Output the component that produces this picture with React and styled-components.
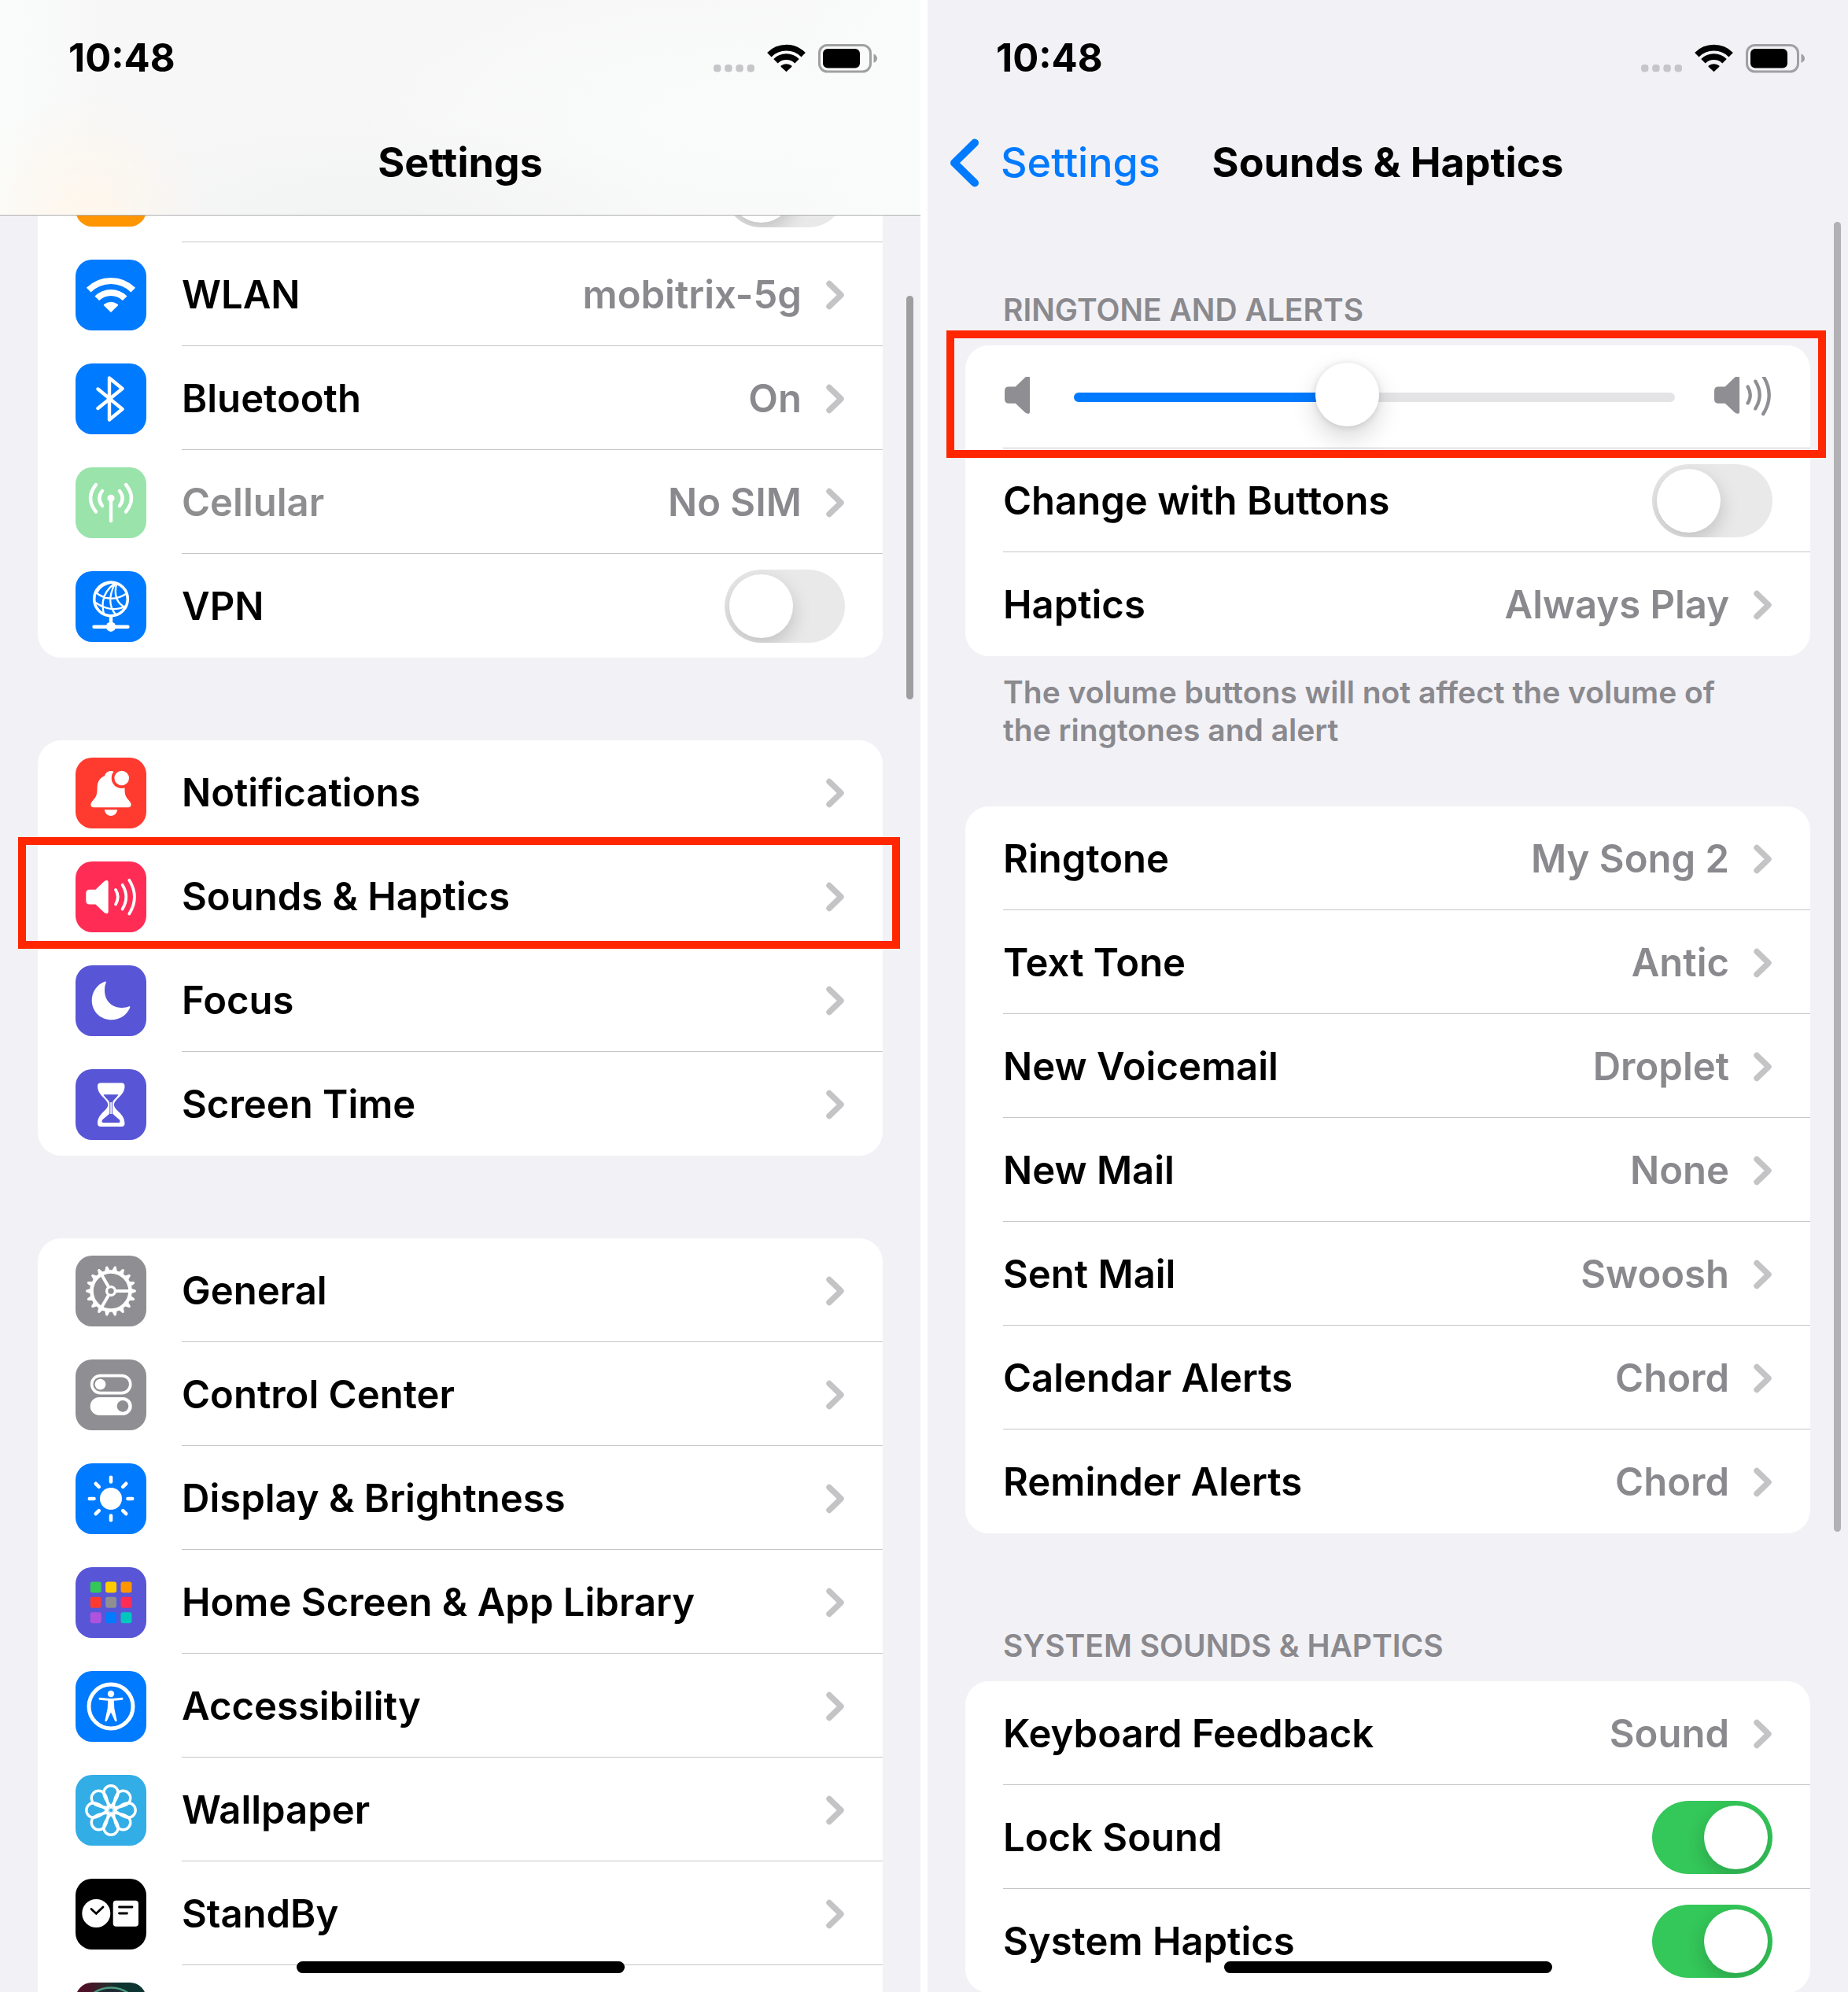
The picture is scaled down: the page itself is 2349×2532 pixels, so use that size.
import React, { useState } from "react";
import styled, { createGlobalStyle } from "styled-components";

const GlobalStyle = createGlobalStyle`
  * {
    box-sizing: border-box;
  }
  body {
    margin: 0;
    background: #fff;
    color: #000;
    font-family: Inter, "Liberation Sans", sans-serif;
    -webkit-font-smoothing: antialiased;
  }
`;

const Page = styled.div`
  display: grid;
  grid-template-columns: 1fr 1fr;
  gap: 9px;
  height: 100vh;
`;

const Phone = styled.section`
  position: relative;
  display: flex;
  flex-direction: column;
  min-width: 0;
  overflow: hidden;
  background: #f2f1f6;
`;

const Header = styled.header`
  position: relative;
  z-index: 2;
  flex: none;
`;

const FrostedHeader = styled(Header)`
  border-bottom: 1px solid #b0b0b2;
  background:
    radial-gradient(ellipse 150px 150px at 110px 270px, #fff7ec, #fff7ec00),
    radial-gradient(ellipse 400px 120px at 460px 273px, #f2f3f3, #f2f3f300),
    radial-gradient(ellipse 520px 200px at 960px 150px, #fafcfb, #fafcfb00),
    linear-gradient(90deg, #fafcfb, #f7f7f7 12%, #f7f7f7 85%, #fafcfb);
`;

const StatusBar = styled.div`
  display: flex;
  align-items: center;
  height: 141px;
  padding: 7px 55px 0 87px;
`;

const Time = styled.time`
  flex: 1;
  font-size: 49px;
  line-height: 60px;
  font-weight: 700;
`;

const StatusIcons = styled.div`
  display: flex;
  align-items: center;
  gap: 16px;
`;

const NavBar = styled.nav`
  display: grid;
  grid-template-columns: 1fr auto 1fr;
  align-items: center;
  height: 132px;
`;

const Title = styled.h1`
  grid-column: 2;
  margin: 0;
  font-size: 52px;
  line-height: 60px;
  font-weight: 700;
`;

const BackLink = styled.a`
  display: flex;
  align-items: center;
  gap: 27px;
  padding-left: 28px;
  color: #007aff;
  font-size: 52px;
  line-height: 60px;
  font-weight: 500;
  text-decoration: none;
`;

const List = styled.main`
  flex: 1;
  min-height: 0;
  padding: ${(p) => p.$top || 0}px 48px 0;
`;

/* the list is scrolled, its first row sits partly under the header */
const ScrolledList = styled(List)`
  margin-top: -98px;
`;

const Card = styled.div`
  margin-bottom: ${(p) => p.$space || 0}px;
  border-radius: 30px;
  background: #fff;
`;

const CardLabel = styled.h2`
  margin: 0 0 21px 48px;
  color: #8a898e;
  font-size: 39px;
  line-height: 48px;
  font-weight: 600;
`;

const CardNote = styled.p`
  margin: 22px 48px 73px;
  color: #8a898e;
  font-size: 39px;
  line-height: 48px;
  font-weight: 600;
`;

const Row = styled.div`
  position: relative;
  display: flex;
  align-items: center;
  gap: 45px;
  padding: 2px 0 0 48px;
  color: ${(p) => (p.$dim ? "#8e8e90" : "#000")};
  text-decoration: none;
`;

const RowBody = styled.div`
  display: flex;
  flex: 1;
  align-items: center;
  gap: 30px;
  height: 130px;
  padding-right: 48px;
  border-bottom: 1px solid #c6c6c8;

  ${Row}:last-child > & {
    border-bottom-color: transparent;
  }
`;

const Label = styled.span`
  flex: 1;
  font-size: 49px;
  line-height: 60px;
  font-weight: 600;
  white-space: nowrap;
`;

const Value = styled.span`
  color: #8a898e;
  font-size: 49px;
  line-height: 60px;
  font-weight: 600;
  white-space: nowrap;
`;

const Tile = styled.svg`
  display: block;
  flex: none;
  width: 90px;
  height: 90px;
  border-radius: 21px;
  background: ${(p) => p.$bg};
`;

const Switch = styled.input`
  appearance: none;
  flex: none;
  width: 153px;
  height: 93px;
  margin: 0;
  padding: 6px;
  overflow: hidden;
  border-radius: 47px;
  background: #e9e9ea;

  &::before {
    content: "";
    display: block;
    width: 81px;
    height: 81px;
    border-radius: 50%;
    background: #fff;
    box-shadow: 0 9px 24px rgba(0, 0, 0, 0.18);
  }
  &:checked {
    background: #34c759;
  }
  &:checked::before {
    margin-left: auto;
  }
`;

const SliderBody = styled(RowBody)`
  gap: 50px;
  height: 129px;
`;

const Slider = styled.input`
  appearance: none;
  flex: 1;
  min-width: 0;
  height: 12px;
  margin: 0;
  background: none;

  &::-webkit-slider-runnable-track {
    height: 12px;
    border-radius: 6px;
    background: linear-gradient(
      90deg,
      #007aff ${(p) => p.value}%,
      #e4e4e6 ${(p) => p.value}%
    );
  }
  &::-webkit-slider-thumb {
    appearance: none;
    width: 81px;
    height: 81px;
    margin-top: -38px;
    border-radius: 50%;
    background: #fff;
    box-shadow:
      0 1px 8px rgba(0, 0, 0, 0.12),
      0 14px 32px rgba(0, 0, 0, 0.16);
  }
`;

const Highlight = styled.div`
  position: absolute;
  z-index: 1;
  inset: ${(p) => p.$inset};
  border: 10px solid #ff2600;
  pointer-events: none;
`;

const ScrollBar = styled.div`
  position: absolute;
  right: 9px;
  top: ${(p) => p.$top}px;
  height: ${(p) => p.$size}px;
  width: 9px;
  border-radius: 5px;
  background: ${(p) => p.$color};
`;

const HomeBar = styled.div`
  position: absolute;
  z-index: 3;
  bottom: 24px;
  left: 50%;
  width: 417px;
  height: 15px;
  margin-left: -208px;
  border-radius: 8px;
  background: #000;
`;

const WifiShape = ({ band = 8 }) => (
  <>
    <path
      d="M16.7 38.7A40 40 0 0 1 73.3 38.7M27.3 49.3A25 25 0 0 1 62.7 49.3"
      fill="none"
      stroke="currentColor"
      strokeWidth={band}
    />
    <path
      d="M45 67L36.2 58.6Q35 57.4 36.6 56.4Q45 51 53.4 56.4Q55 57.4 53.8 58.6Z"
      fill="currentColor"
    />
  </>
);

const speakerBody =
  "M18 35.8H25.5L36.5 25.3Q41.7 22 41.7 27V63.4Q41.7 68 36.5 65L25.5 54.6H18Q13.3 54.6 13.3 50V40.4Q13.3 35.8 18 35.8Z";

const SpeakerShape = ({ waves = true }) => (
  <>
    <path d={speakerBody} fill="currentColor" />
    {waves && (
      <path
        d="M51 35.9Q56.6 45.2 51 54.4M59.6 29.8Q69 45.2 59.6 60.6M68.3 23.8Q81.6 45.2 68.3 66.6"
        fill="none"
        stroke="currentColor"
        strokeWidth="3.8"
        strokeLinecap="round"
      />
    )}
  </>
);

const turns = (n) => Array.from({ length: n }, (_, i) => (360 / n) * i);

const homeColors = [
  "#34c759",
  "#ffcc00",
  "#ff9500",
  "#ff3b30",
  "#8e8e93",
  "#ff2d55",
  "#af52de",
  "#007aff",
  "#00c7be",
];

const glyphs = {
  airplane: {
    bg: "#ff9500",
    art: (
      <path
        d="M73 45q0-4-8-4H54L39 20h-5l7 21H28l-6-8h-4l4 12-4 12h4l6-8h13l-7 21h5l15-21h11q8 0 8-4z"
        fill="#fff"
      />
    ),
  },
  wlan: { bg: "#007aff", art: <WifiShape /> },
  bluetooth: {
    bg: "#007aff",
    art: (
      <path
        d="M28.5 32.5L59.5 58L43 71.5V18.5L59.5 32L28.5 57"
        fill="none"
        stroke="#fff"
        strokeWidth="4.4"
        strokeLinecap="round"
        strokeLinejoin="round"
      />
    ),
  },
  cellular: {
    bg: "#9ae4ab",
    art: (
      <g fill="none" stroke="#fff" strokeWidth="4.4" strokeLinecap="round">
        <path d="M45 40V68M34 30Q26.6 39.3 34 49M56 30Q63.4 39.3 56 49M26 22Q12 39.3 26 56.5M64 22Q78 39.3 64 56.5" />
        <circle cx="45" cy="39.3" r="4.6" fill="#fff" stroke="none" />
      </g>
    ),
  },
  vpn: {
    bg: "#007aff",
    art: (
      <g fill="none" stroke="#fff" strokeWidth="2.3" strokeLinecap="round">
        <circle cx="45" cy="35.4" r="21.3" strokeWidth="3.6" />
        <path d="M49 16Q30 31 36 54M50 16Q38 40 51 55M52 16Q47 38 63 46M44 15Q32 18 28 26M25.5 27Q45 42 65.5 28M25.5 40Q46 54 64.5 44" />
        <path d="M45 58V68M23.5 70.7H66.5" strokeWidth="4.4" />
        <circle cx="45" cy="70.7" r="6.2" fill="#fff" stroke="none" />
      </g>
    ),
  },
  bell: {
    bg: "#ff3b30",
    art: (
      <>
        <path
          d="M45 17C41 17 38 19.5 37 23.3C31 25.5 27.7 31 27.6 38C27.5 48 26 50 22.5 54C19.5 57.5 19 59 19.6 61Q20.2 63.2 22.5 63.2H67.5Q69.8 63.2 70.4 61C71 59 70.5 57.5 67.5 54C64 50 62.5 48 62.4 38C62.3 31 59 25.5 53 23.3C52 19.5 49 17 45 17ZM36.7 66.2H53.3Q51.5 74 45 74Q38.5 74 36.7 66.2Z"
          fill="#fff"
        />
        <circle cx="58.7" cy="26" r="13" fill="#ff3b30" />
        <circle cx="58.7" cy="26" r="9.3" fill="#fff" />
      </>
    ),
  },
  sound: { bg: "#ff2d55", art: <SpeakerShape /> },
  moon: {
    bg: "#5856d6",
    art: (
      <path
        d="M68 52.3C65.5 53.6 62.5 54 59 54C46 54 37 45 37 32C37 28 37.5 25 38.7 22.3Q39.3 19.8 37 20.7C27 24.5 20.7 34 20.7 44.5C20.7 58.5 31.5 69.3 46 69.3C56.5 69.3 65.5 63 69.2 53.8Q69.7 51.5 68 52.3Z"
        fill="#fff"
      />
    ),
  },
  hourglass: {
    bg: "#5856d6",
    art: (
      <>
        <path
          d="M32 17.5H58.5Q62.5 17.5 62.5 21.5C62.5 34 49 38 49 45.2C49 52.5 62.5 56 62.5 69Q62.5 73 58.5 73H32Q28 73 28 69C28 56 41.3 52.5 41.3 45.2C41.3 38 28 34 28 21.5Q28 17.5 32 17.5Z"
          fill="#fff"
        />
        <path
          d="M35.5 32.3H54.5C52.5 36.5 47.5 39 46.9 43V56.5L56 64.5Q57.5 68 54.5 68H35.5Q32.5 68 34 64.5L43.3 56.5V43C42.5 39 37.5 36.5 35.5 32.3Z"
          fill="#5856d6"
        />
        <path d="M45.1 42V57" stroke="#fff" strokeWidth="1.6" />
      </>
    ),
  },
  gear: {
    bg: "#8e8e93",
    art: (
      <g fill="none" stroke="#fff">
        <circle cx="45" cy="45" r="24.5" strokeWidth="4.6" />
        <circle cx="45" cy="45" r="5.4" strokeWidth="3.4" />
        {turns(3).map((a) => (
          <path
            key={a}
            d="M51.5 45H68"
            strokeWidth="4"
            transform={`rotate(${a} 45 45)`}
          />
        ))}
        {turns(18).map((a) => (
          <path
            key={a}
            d="M71 41.8L76.5 43.7Q77.5 45 76.5 46.3L71 48.2Z"
            fill="#fff"
            stroke="none"
            transform={`rotate(${a} 45 45)`}
          />
        ))}
      </g>
    ),
  },
  control: {
    bg: "#8e8e93",
    art: (
      <>
        <rect
          x="20.6"
          y="20.6"
          width="49.2"
          height="22"
          rx="11"
          fill="none"
          stroke="#fff"
          strokeWidth="3.6"
        />
        <circle cx="31.5" cy="31.6" r="6.9" fill="#fff" />
        <rect x="18.7" y="47.9" width="53" height="23" rx="11.5" fill="#fff" />
        <circle cx="60" cy="59.4" r="7.3" fill="#8e8e93" />
      </>
    ),
  },
  sun: {
    bg: "#007aff",
    art: (
      <g stroke="#fff" strokeWidth="4.6" strokeLinecap="round">
        <circle cx="45" cy="45" r="14" fill="#fff" stroke="none" />
        {turns(8).map((a) => (
          <path key={a} d="M66.5 45H72.2" transform={`rotate(${a} 45 45)`} />
        ))}
      </g>
    ),
  },
  home: {
    bg: "#5856d6",
    art: homeColors.map((c, i) => (
      <rect
        key={c}
        x={18.7 + (i % 3) * 19.4}
        y={18.4 + Math.floor(i / 3) * 19.4}
        width="14"
        height="14"
        rx="3"
        fill={c}
      />
    )),
  },
  access: {
    bg: "#007aff",
    art: (
      <g fill="none" stroke="#fff" strokeLinecap="round" strokeLinejoin="round">
        <circle cx="45" cy="45" r="28" strokeWidth="5" />
        <circle cx="45" cy="29" r="4.2" fill="#fff" stroke="none" />
        <path d="M31 35.3Q45 37.5 59 35.3" strokeWidth="3" />
        <path
          d="M42.5 37H47.5L48 47.5L51.3 63L45 49.5L38.7 63L42 47.5Z"
          fill="#fff"
          strokeWidth="2.6"
        />
      </g>
    ),
  },
  flower: {
    bg: "#32ade6",
    art: (
      <g fill="none" stroke="#fff" strokeWidth="3.4">
        {turns(8).map((a) => (
          <path
            key={a}
            d="M45 40.5C41 35 35.8 29.5 35.8 23A9.2 9.2 0 0 1 54.2 23C54.2 29.5 49 35 45 40.5Z"
            transform={`rotate(${a} 45 45)`}
          />
        ))}
      </g>
    ),
  },
  standby: {
    bg: "#000",
    art: (
      <g fill="#fff">
        <circle cx="26.3" cy="44" r="18" />
        <rect x="47.7" y="27.7" width="32.3" height="33" rx="4" />
        <path
          d="M20 38.5L26.3 44.3L35 36M55.5 36H72M55.5 44H65.5"
          fill="none"
          stroke="#000"
          strokeWidth="2.8"
          strokeLinecap="round"
        />
      </g>
    ),
  },
  siri: {
    bg: "linear-gradient(90deg, #4d1026 15%, #2d2a2e 42%, #0c3430 60%)",
    art: (
      <circle
        cx="45"
        cy="45"
        r="38.5"
        fill="#1c2b33"
        stroke="#4f9a80"
        strokeWidth="2.5"
      />
    ),
  },
};

const Glyph = ({ name }) => (
  <Tile viewBox="0 0 90 90" $bg={glyphs[name].bg} color="#fff" aria-hidden="true">
    {glyphs[name].art}
  </Tile>
);

const Chevron = () => (
  <svg width="25" height="38" viewBox="0 0 25 38" aria-hidden="true">
    <path
      d="M5 4.5L20 19L5 33.5"
      fill="none"
      stroke="#c4c4c6"
      strokeWidth="7.4"
      strokeLinecap="round"
      strokeLinejoin="round"
    />
  </svg>
);

const PhoneStatus = () => (
  <StatusBar>
    <Time>10:48</Time>
    <StatusIcons>
      <svg width="52" height="36" viewBox="0 0 52 36" aria-hidden="true">
        {[0, 1, 2, 3].map((i) => (
          <rect key={i} x={i * 14.2} y="26" width="9.4" height="9.4" rx="4" fill="#c6c6c8" />
        ))}
      </svg>
      <svg width="49" height="37" viewBox="13 22 64 46" aria-hidden="true">
        <WifiShape band={10} />
      </svg>
      <svg width="75" height="37" viewBox="0 0 75 37" aria-hidden="true">
        <rect x="1.5" y="1.5" width="65" height="33.5" rx="10" fill="none" stroke="#a0a0a2" strokeWidth="3" />
        <rect x="6" y="6" width="47" height="24.5" rx="6" fill="#000" />
        <path d="M70.5 12.5Q75 14.5 75 18.3Q75 22 70.5 24Z" fill="#a0a0a2" />
      </svg>
    </StatusIcons>
  </StatusBar>
);

const LinkRow = ({ icon, label, value, dim, highlight }) => (
  <Row as="a" href="#" $dim={dim}>
    {icon && <Glyph name={icon} />}
    <RowBody>
      <Label>{label}</Label>
      {value && <Value>{value}</Value>}
      <Chevron />
    </RowBody>
    {highlight && <Highlight $inset="-9px -22px -1px -25px" />}
  </Row>
);

const SwitchRow = ({ icon, label, name, on = false }) => {
  const [checked, setChecked] = useState(on);
  return (
    <Row as="label">
      {icon && <Glyph name={icon} />}
      <RowBody>
        <Label>{label}</Label>
        <Switch
          type="checkbox"
          role="switch"
          aria-label={name || label}
          checked={checked}
          onChange={(e) => setChecked(e.target.checked)}
        />
      </RowBody>
    </Row>
  );
};

const VolumeRow = () => {
  const [volume, setVolume] = useState(45);
  return (
    <Row>
      <SliderBody>
        <svg width="40" height="52" viewBox="0 0 40 52" color="#8e8e93" aria-hidden="true">
          <g transform="translate(-13 -28) scale(1.13)">
            <SpeakerShape waves={false} />
          </g>
        </svg>
        <Slider
          type="range"
          min="0"
          max="100"
          aria-label="Ringtone and alerts volume"
          value={volume}
          onChange={(e) => setVolume(e.target.value)}
        />
        <svg width="74" height="52" viewBox="0 0 74 52" color="#8e8e93" aria-hidden="true">
          <g transform="translate(-15 -28) scale(1.13)">
            <SpeakerShape />
          </g>
        </svg>
      </SliderBody>
      <Highlight $inset="-19px -20px -12px -24px" />
    </Row>
  );
};

const SettingsScreen = () => (
  <Phone>
    <FrostedHeader>
      <PhoneStatus />
      <NavBar>
        <Title>Settings</Title>
      </NavBar>
    </FrostedHeader>
    <ScrolledList>
      <Card $space={105}>
        <SwitchRow icon="airplane" name="Airplane Mode" />
        <LinkRow icon="wlan" label="WLAN" value="mobitrix-5g" />
        <LinkRow icon="bluetooth" label="Bluetooth" value="On" />
        <LinkRow icon="cellular" label="Cellular" value="No SIM" dim />
        <SwitchRow icon="vpn" label="VPN" />
      </Card>
      <Card $space={105}>
        <LinkRow icon="bell" label="Notifications" />
        <LinkRow icon="sound" label="Sounds & Haptics" highlight />
        <LinkRow icon="moon" label="Focus" />
        <LinkRow icon="hourglass" label="Screen Time" />
      </Card>
      <Card>
        <LinkRow icon="gear" label="General" />
        <LinkRow icon="control" label="Control Center" />
        <LinkRow icon="sun" label="Display & Brightness" />
        <LinkRow icon="home" label="Home Screen & App Library" />
        <LinkRow icon="access" label="Accessibility" />
        <LinkRow icon="flower" label="Wallpaper" />
        <LinkRow icon="standby" label="StandBy" />
        <LinkRow icon="siri" />
      </Card>
    </ScrolledList>
    <ScrollBar $top={376} $size={513} $color="#9e9ea0" />
    <HomeBar />
  </Phone>
);

const SoundsScreen = () => (
  <Phone>
    <Header>
      <PhoneStatus />
      <NavBar>
        <BackLink href="#">
          <svg width="38" height="62" viewBox="0 0 38 62" aria-hidden="true">
            <path
              d="M32 5.5L6 31L32 56.5"
              fill="none"
              stroke="currentColor"
              strokeWidth="10"
              strokeLinecap="round"
              strokeLinejoin="round"
            />
          </svg>
          Settings
        </BackLink>
        <Title>Sounds &amp; Haptics</Title>
      </NavBar>
    </Header>
    <List $top={97}>
      <CardLabel>RINGTONE AND ALERTS</CardLabel>
      <Card>
        <VolumeRow />
        <SwitchRow label="Change with Buttons" />
        <LinkRow label="Haptics" value="Always Play" />
      </Card>
      <CardNote>
        The volume buttons will not affect the volume of
        <br />
        the ringtones and alert
      </CardNote>
      <Card $space={119}>
        <LinkRow label="Ringtone" value="My Song 2" />
        <LinkRow label="Text Tone" value="Antic" />
        <LinkRow label="New Voicemail" value="Droplet" />
        <LinkRow label="New Mail" value="None" />
        <LinkRow label="Sent Mail" value="Swoosh" />
        <LinkRow label="Calendar Alerts" value="Chord" />
        <LinkRow label="Reminder Alerts" value="Chord" />
      </Card>
      <CardLabel>SYSTEM SOUNDS &amp; HAPTICS</CardLabel>
      <Card>
        <LinkRow label="Keyboard Feedback" value="Sound" />
        <SwitchRow label="Lock Sound" on />
        <SwitchRow label="System Haptics" on />
      </Card>
    </List>
    <ScrollBar $top={282} $size={1665} $color="#b1b1b6" />
    <HomeBar />
  </Phone>
);

const App = () => (
  <>
    <GlobalStyle />
    <Page>
      <SettingsScreen />
      <SoundsScreen />
    </Page>
  </>
);

export default App;
